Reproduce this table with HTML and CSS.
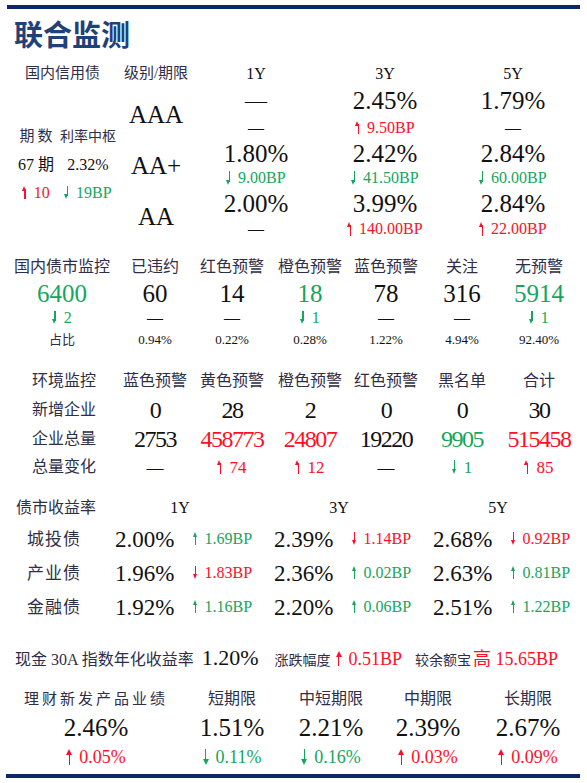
FILE: index.html
```html
<!DOCTYPE html>
<html lang="zh-CN">
<head>
  <meta charset="UTF-8" />
  <meta name="viewport" content="width=device-width, initial-scale=1.0"/>
  <title>联合监测</title>
  <link rel="stylesheet" href="styles.css">
</head>
<body>
  <div class="page">
    <div class="bar"></div>
    <h1 class="title">联合监测</h1>

    <!-- 国内信用债 -->
    <section class="credit">
      <div class="cell lbl head-left">国内信用债</div>
      <div class="cell lbl">级别/期限</div>
      <div class="cell yr">1Y</div>
      <div class="cell yr">3Y</div>
      <div class="cell yr">5Y</div>

      <div class="issue">
        <div class="cell lbl wide">期数</div>
        <div class="cell lbl">利率中枢</div>
        <div class="cell num-s">67 期</div>
        <div class="cell num-s">2.32%</div>
        <div class="cell num-s red"><i class="up"></i>10</div>
        <div class="cell chg green"><i class="dn"></i>19BP</div>
      </div>

      <div class="cell grade">AAA</div>
      <div class="cell val dash">—</div>
      <div class="cell val">2.45%</div>
      <div class="cell val">1.79%</div>
      <div class="cell chg">—</div>
      <div class="cell chg red"><i class="up"></i>9.50BP</div>
      <div class="cell chg">—</div>

      <div class="cell grade">AA+</div>
      <div class="cell val">1.80%</div>
      <div class="cell val">2.42%</div>
      <div class="cell val">2.84%</div>
      <div class="cell chg green"><i class="dn"></i>9.00BP</div>
      <div class="cell chg green"><i class="dn"></i>41.50BP</div>
      <div class="cell chg green"><i class="dn"></i>60.00BP</div>

      <div class="cell grade">AA</div>
      <div class="cell val">2.00%</div>
      <div class="cell val">3.99%</div>
      <div class="cell val">2.84%</div>
      <div class="cell chg">—</div>
      <div class="cell chg red"><i class="up"></i>140.00BP</div>
      <div class="cell chg red"><i class="up"></i>22.00BP</div>
    </section>

    <!-- 国内债市监控 -->
    <section class="market">
      <div class="cell lbl">国内债市监控</div>
      <div class="cell lbl">已违约</div>
      <div class="cell lbl">红色预警</div>
      <div class="cell lbl">橙色预警</div>
      <div class="cell lbl">蓝色预警</div>
      <div class="cell lbl">关注</div>
      <div class="cell lbl">无预警</div>

      <div class="cell big green">6400</div>
      <div class="cell big">60</div>
      <div class="cell big">14</div>
      <div class="cell big green">18</div>
      <div class="cell big">78</div>
      <div class="cell big">316</div>
      <div class="cell big green">5914</div>

      <div class="cell chg2 green"><i class="dn"></i>2</div>
      <div class="cell chg2">—</div>
      <div class="cell chg2">—</div>
      <div class="cell chg2 green"><i class="dn"></i>1</div>
      <div class="cell chg2">—</div>
      <div class="cell chg2">—</div>
      <div class="cell chg2 green"><i class="dn"></i>1</div>

      <div class="cell small lbl">占比</div>
      <div class="cell small">0.94%</div>
      <div class="cell small">0.22%</div>
      <div class="cell small">0.28%</div>
      <div class="cell small">1.22%</div>
      <div class="cell small">4.94%</div>
      <div class="cell small">92.40%</div>
    </section>

    <!-- 环境监控 -->
    <section class="env">
      <div class="cell lbl row-lbl">环境监控</div>
      <div class="cell lbl">蓝色预警</div>
      <div class="cell lbl">黄色预警</div>
      <div class="cell lbl">橙色预警</div>
      <div class="cell lbl">红色预警</div>
      <div class="cell lbl">黑名单</div>
      <div class="cell lbl">合计</div>

      <div class="cell lbl row-lbl">新增企业</div>
      <div class="cell mid">0</div>
      <div class="cell mid">28</div>
      <div class="cell mid">2</div>
      <div class="cell mid">0</div>
      <div class="cell mid">0</div>
      <div class="cell mid">30</div>

      <div class="cell lbl row-lbl">企业总量</div>
      <div class="cell mid">2753</div>
      <div class="cell mid red">458773</div>
      <div class="cell mid red">24807</div>
      <div class="cell mid">19220</div>
      <div class="cell mid green">9905</div>
      <div class="cell mid red">515458</div>

      <div class="cell lbl row-lbl">总量变化</div>
      <div class="cell chg3">—</div>
      <div class="cell chg3 red"><i class="up"></i>74</div>
      <div class="cell chg3 red"><i class="up"></i>12</div>
      <div class="cell chg3">—</div>
      <div class="cell chg3 green"><i class="dn"></i>1</div>
      <div class="cell chg3 red"><i class="up"></i>85</div>
    </section>

    <!-- 债市收益率 -->
    <section class="yield">
      <div class="cell lbl h-lbl">债市收益率</div>
      <div class="cell yr4">1Y</div>
      <div class="cell yr4">3Y</div>
      <div class="cell yr4">5Y</div>

      <div class="cell lbl row-lbl">城投债</div>
      <div class="pair"><span class="v">2.00%</span><span class="d green"><i class="up"></i>1.69BP</span></div>
      <div class="pair"><span class="v">2.39%</span><span class="d red"><i class="dn"></i>1.14BP</span></div>
      <div class="pair"><span class="v">2.68%</span><span class="d red"><i class="dn"></i>0.92BP</span></div>

      <div class="cell lbl row-lbl">产业债</div>
      <div class="pair"><span class="v">1.96%</span><span class="d red"><i class="dn"></i>1.83BP</span></div>
      <div class="pair"><span class="v">2.36%</span><span class="d green"><i class="up"></i>0.02BP</span></div>
      <div class="pair"><span class="v">2.63%</span><span class="d green"><i class="up"></i>0.81BP</span></div>

      <div class="cell lbl row-lbl">金融债</div>
      <div class="pair"><span class="v">1.92%</span><span class="d green"><i class="up"></i>1.16BP</span></div>
      <div class="pair"><span class="v">2.20%</span><span class="d green"><i class="up"></i>0.06BP</span></div>
      <div class="pair"><span class="v">2.51%</span><span class="d green"><i class="up"></i>1.22BP</span></div>
    </section>

    <!-- 现金 30A -->
    <div class="cash">
      <span class="cash-lbl">现金 30A 指数年化收益率</span>
      <span class="cash-val">1.20%</span>
      <span class="cash-sub">涨跌幅度</span>
      <span class="cash-chg red"><i class="up"></i>0.51BP</span>
      <span class="cash-sub cmp">较余额宝</span>
      <span class="cash-chg hi red">高 15.65BP</span>
    </div>

    <!-- 理财新发产品业绩 -->
    <section class="wealth">
      <div class="cell lbl first">理财新发产品业绩</div>
      <div class="cell lbl">短期限</div>
      <div class="cell lbl">中短期限</div>
      <div class="cell lbl">中期限</div>
      <div class="cell lbl">长期限</div>

      <div class="cell val">2.46%</div>
      <div class="cell val">1.51%</div>
      <div class="cell val">2.21%</div>
      <div class="cell val">2.39%</div>
      <div class="cell val">2.67%</div>

      <div class="cell pct red"><i class="up"></i>0.05%</div>
      <div class="cell pct green"><i class="dn"></i>0.11%</div>
      <div class="cell pct green"><i class="dn"></i>0.16%</div>
      <div class="cell pct red"><i class="up"></i>0.03%</div>
      <div class="cell pct red"><i class="up"></i>0.09%</div>
    </section>

    <div class="bar bottom"></div>
  </div>
</body>
</html>
```

FILE: styles.css
```css
:root {
  --navy: #0c2868;
  --title: #1f4179;
  --ink: #111111;
  --label: #2e2e48;
  --red: #ff0f26;
  --green: #14a65c;
}

* {
  margin: 0;
  padding: 0;
  box-sizing: border-box;
}

body {
  background: #ffffff;
  color: var(--ink);
  font-family: "Liberation Serif", "Noto Sans CJK SC", serif;
  line-height: 1;
}

.page {
  width: 587px;
  height: 783px;
  overflow: hidden;
}

.bar {
  height: 4px;
  margin: 5px 7px 0 7px;
  background: var(--navy);
}

.bar.bottom {
  margin: 1px 7px 0 6px;
}

.title {
  height: 51px;
  line-height: 48px;
  padding-left: 14px;
  font-family: "Noto Sans CJK SC", sans-serif;
  font-size: 29px;
  font-weight: 700;
  color: var(--title);
}

/* shared cells */
.cell {
  display: flex;
  justify-content: center;
  align-items: center;
  white-space: nowrap;
}

.lbl {
  color: var(--label);
  font-size: 15px;
}

.red { color: var(--red); }
.green { color: var(--green); }

/* thin arrows */
.up, .dn {
  display: inline-block;
  position: relative;
  width: .34em;
  height: .84em;
  margin-right: .38em;
  vertical-align: -.06em;
}

.up::before, .dn::before {
  content: "";
  position: absolute;
  left: calc(50% - .6px);
  width: 1.2px;
  background: currentColor;
}

.up::before { top: .2em; bottom: 0; }
.dn::before { top: 0; bottom: .2em; }

.up::after, .dn::after {
  content: "";
  position: absolute;
  left: 0;
  border-left: .17em solid transparent;
  border-right: .17em solid transparent;
}

.up::after { top: 0; border-bottom: .34em solid currentColor; }
.dn::after { bottom: 0; border-top: .34em solid currentColor; }

/* 国内信用债 */
.credit {
  display: grid;
  grid-template-columns: 108px 68px 132px 126px 130px;
  grid-template-rows: 27px 27px 27px 25px 24px 26px 26px;
  align-items: center;
  margin: 0 0 12px 14px;
}

.head-left {
  justify-content: flex-start;
  padding-left: 11px;
}

.yr { font-size: 16px; }
.val { font-size: 25px; }
.val.dash { font-size: 22px; }
.chg { font-size: 16px; }

.grade {
  grid-row: span 2;
  font-size: 25px;
}

.issue {
  grid-row: span 6;
  align-self: stretch;
  display: grid;
  grid-template-columns: 44px 60px;
  grid-template-rows: repeat(3, 28px);
  align-content: center;
}

.issue .lbl { font-size: 14px; }
.issue .wide { font-size: 15px; letter-spacing: 3px; padding-left: 3px; }
.num-s { font-size: 16px; }

/* 国内债市监控 */
.market {
  display: grid;
  grid-template-columns: 96px 90px 64px 92px 60px 92px 62px;
  grid-template-rows: 26px 26px 23px 21px;
  align-items: center;
  margin: 0 0 16px 14px;
}

.market .lbl { font-size: 16px; }
.market .small { font-size: 13px; }
.big { font-size: 25px; }
.chg2 { font-size: 16px; }
.small { font-size: 14px; }

/* 环境监控 */
.env {
  display: grid;
  grid-template-columns: 96px 90px 64px 92px 60px 92px 62px;
  grid-template-rows: 29px 29px 29px 28px;
  align-items: center;
  margin: 0 0 13px 14px;
}

.env .lbl { font-size: 16px; }
.env .row-lbl {
  justify-content: flex-start;
  padding-left: 18px;
}

.mid {
  font-size: 24px;
  letter-spacing: -1.5px;
}

.chg3 { font-size: 17px; }

/* 债市收益率 */
.yield {
  display: grid;
  grid-template-columns: 115px 159px 159px 154px;
  grid-template-rows: 28px 34px 34px 34px;
  align-items: center;
  margin-bottom: 20px;
}

.yield .h-lbl {
  justify-content: flex-start;
  padding-left: 16px;
  font-size: 16px;
}

.yr4 {
  width: 130px;
  font-size: 16px;
}

.yield .row-lbl {
  justify-content: flex-start;
  padding-left: 27px;
  font-size: 17px;
  letter-spacing: 1px;
}

.pair {
  display: flex;
  align-items: center;
  white-space: nowrap;
}

.pair .v {
  width: 78px;
  font-size: 23px;
}

.pair .d { font-size: 16px; }

/* 现金 30A */
.cash {
  display: flex;
  align-items: baseline;
  height: 28px;
  line-height: 28px;
  margin: 0 0 13px 15px;
  white-space: nowrap;
}

.cash-lbl {
  color: var(--label);
  font-size: 16px;
}

.cash-val {
  margin-left: 8px;
  font-size: 22px;
}

.cash-sub {
  margin-left: 16px;
  color: var(--label);
  font-size: 14px;
}

.cash-sub.cmp { margin-left: 13px; }

.cash-chg {
  margin-left: 5px;
  font-size: 18px;
}

.cash-chg.hi { margin-left: 2px; }

/* 理财新发产品业绩 */
.wealth {
  display: grid;
  grid-template-columns: 164px 108px 90px 104px 96px;
  grid-template-rows: 28px 28px 32px;
  align-items: center;
  margin-left: 14px;
}

.wealth .lbl { font-size: 16px; }
.wealth .first {
  font-size: 15px;
  letter-spacing: 3px;
}

.pct { font-size: 18px; }
```
